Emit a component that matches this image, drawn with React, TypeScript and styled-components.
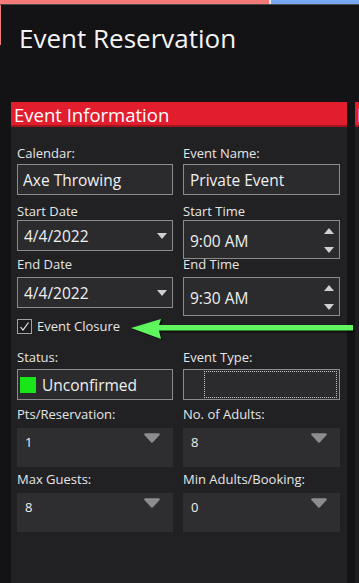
import React from "react";
import styled, { createGlobalStyle } from "styled-components";

const Global = createGlobalStyle`
  html, body { margin: 0; padding: 0; background: #131215; }
  body { font-family: "Open Sans", "Noto Sans", sans-serif; }
  * { box-sizing: border-box; }
`;

const Page = styled.div`
  position: relative;
  width: 359px;
  height: 583px;
  overflow: hidden;
  background: #131215;
  color: #e8e8e8;
`;

const TopStrip = styled.div`
  display: flex;
  height: 5px;
  border-bottom: 1px solid #4a494c;
`;

const StripPart = styled.div<{ $c: string; $w?: string }>`
  background: ${(p) => p.$c};
  flex: ${(p) => (p.$w ? `0 0 ${p.$w}` : "1 1 auto")};
`;

const TitleBar = styled.div`
  height: 97px;
  padding: 17px 0 0 19px;
  background: linear-gradient(#f07a7a, #f07a7a) no-repeat 0 0 / 1px 40px;
`;

const Title = styled.h1`
  margin: 0;
  font-weight: 400;
  font-size: 26px;
  line-height: 32px;
  color: #f4f4f4;
`;

const Content = styled.div`
  display: flex;
  gap: 8px;
  padding-left: 11px;
  height: 481px;
`;

const Panel = styled.section<{ $w: string; $bg: string }>`
  flex: 0 0 ${(p) => p.$w};
  background: ${(p) => p.$bg};
`;

const PanelHeader = styled.div<{ $pl: number }>`
  height: 25px;
  padding: 3px 0 0 ${(p) => p.$pl}px;
  background: #e11d2e;
  border-bottom: 2px solid #a3161f;
  font-size: 18.5px;
  line-height: 20px;
  color: #ffffff;
  white-space: nowrap;
  overflow: hidden;
`;

const Body = styled.div`
  padding: 0 7px 0 6px;
`;

const Row = styled.div<{ $mt: number }>`
  display: grid;
  grid-template-columns: 156px 157px;
  column-gap: 10px;
  margin-top: ${(p) => p.$mt}px;
`;

const Field = styled.div`
  display: flex;
  flex-direction: column;
`;

const Label = styled.label<{ $gap: number }>`
  font-size: 13px;
  line-height: 16px;
  color: #e6e6e6;
  margin-bottom: ${(p) => p.$gap}px;
  white-space: nowrap;
`;

const Input = styled.div<{ $h: number; $pl?: number; $pt?: number; $mb?: number }>`
  position: relative;
  display: flex;
  align-items: center;
  height: ${(p) => p.$h}px;
  padding: ${(p) => p.$pt ?? 0}px 0 0 ${(p) => p.$pl ?? 5}px;
  margin-bottom: ${(p) => p.$mb ?? 0}px;
  background: #2b2a2d;
  border: 1px solid #8b8b8d;
  font-size: 15.5px;
  line-height: 20px;
  color: #f0f0f0;
  white-space: nowrap;
`;

const Combo = styled.div`
  display: flex;
  justify-content: space-between;
  align-items: flex-start;
  height: 39px;
  padding: 6px 13px 0 8px;
  background: #2e2d30;
  font-size: 13px;
  line-height: 16px;
  color: #eeeeee;
`;

const ComboArrow = styled.svg`
  margin-top: -1px;
`;

const DateArrow = styled.svg`
  position: absolute;
  right: 5px;
  top: 12px;
`;

const Spinner = styled.div`
  position: absolute;
  right: 5px;
  top: 7px;
  display: flex;
  flex-direction: column;
  gap: 13px;
`;

const Swatch = styled.span`
  width: 16px;
  height: 16px;
  background: #19e619;
  margin-right: 6px;
  flex: 0 0 auto;
`;

const FocusRect = styled.div`
  flex: 1 1 auto;
  height: 27px;
  margin: 0 2px 0 20px;
  border: 1px dotted #c4c4c4;
`;

const CheckRow = styled.div`
  display: flex;
  align-items: center;
  gap: 5px;
  margin-top: 10px;
  height: 16px;
  font-size: 13px;
  line-height: 16px;
  color: #e6e6e6;
`;

const CheckBox = styled.span`
  display: flex;
  align-items: center;
  justify-content: center;
  width: 15px;
  height: 15px;
  border: 1px solid #a2a2a4;
  background: #1c1b1e;
`;

const ArrowOverlay = styled.svg`
  position: absolute;
  left: 126px;
  top: 314px;
`;

const SmallTri = () => (
  <svg width="10" height="6" viewBox="0 0 10 6">
    <path d="M0 0 L10 0 L5 6 Z" fill="#cfcfd0" />
  </svg>
);

const UpTri = () => (
  <svg width="10" height="6" viewBox="0 0 10 6">
    <path d="M0 6 L10 6 L5 0 Z" fill="#cfcfd0" />
  </svg>
);

const ComboField = ({ label, value }: { label: string; value: string }) => (
  <Field>
    <Label $gap={6}>{label}</Label>
    <Combo>
      <span>{value}</span>
      <ComboArrow width="16" height="10" viewBox="0 0 16 10">
        <path d="M1.5 1.5 L14.5 1.5 L8 8.5 Z" fill="#8d8d8f" stroke="#8d8d8f" strokeWidth="2.5" strokeLinejoin="round" />
      </ComboArrow>
    </Combo>
  </Field>
);

export default function App() {
  return (
    <>
      <Global />
      <Page>
        <TopStrip>
          <StripPart $c="#f47a7a" $w="269px" />
          <StripPart $c="#e8e8ee" $w="2px" />
          <StripPart $c="#79a7f2" />
        </TopStrip>
        <TitleBar>
          <Title>Event Reservation</Title>
        </TitleBar>
        <Content>
          <Panel $w="336px" $bg="#212023">
            <PanelHeader $pl={3}>Event Information</PanelHeader>
            <Body>
              <Row $mt={18}>
                <Field>
                  <Label $gap={3}>Calendar:</Label>
                  <Input $h={31}>Axe Throwing</Input>
                </Field>
                <Field>
                  <Label $gap={3}>Event Name:</Label>
                  <Input $h={31} $pl={6}>Private Event</Input>
                </Field>
              </Row>
              <Row $mt={8}>
                <Field>
                  <Label $gap={1}>Start Date</Label>
                  <Input $h={31} $pl={6}>
                    4/4/2022
                    <DateArrow width="10" height="6" viewBox="0 0 10 6">
                      <path d="M0 0 L10 0 L5 6 Z" fill="#cfcfd0" />
                    </DateArrow>
                  </Input>
                </Field>
                <Field>
                  <Label $gap={1}>Start Time</Label>
                  <Input $h={39} $pl={6} $pt={2} $mb={-8}>
                    9:00 AM
                    <Spinner>
                      <UpTri />
                      <SmallTri />
                    </Spinner>
                  </Input>
                </Field>
              </Row>
              <Row $mt={5}>
                <Field>
                  <Label $gap={5}>End Date</Label>
                  <Input $h={31} $pl={6}>
                    4/4/2022
                    <DateArrow width="10" height="6" viewBox="0 0 10 6">
                      <path d="M0 0 L10 0 L5 6 Z" fill="#cfcfd0" />
                    </DateArrow>
                  </Input>
                </Field>
                <Field>
                  <Label $gap={5}>End Time</Label>
                  <Input $h={39} $pl={6} $pt={2} $mb={-8}>
                    9:30 AM
                    <Spinner>
                      <UpTri />
                      <SmallTri />
                    </Spinner>
                  </Input>
                </Field>
              </Row>
              <CheckRow>
                <CheckBox>
                  <svg width="11" height="11" viewBox="0 0 11 11">
                    <path d="M1.5 6 L4 9 L9.5 1.5" fill="none" stroke="#f2f2f2" strokeWidth="1.1" />
                  </svg>
                </CheckBox>
                Event Closure
              </CheckRow>
              <Row $mt={15}>
                <Field>
                  <Label $gap={4}>Status:</Label>
                  <Input $h={31} $pl={2}>
                    <Swatch />
                    Unconfirmed
                  </Input>
                </Field>
                <Field>
                  <Label $gap={4}>Event Type:</Label>
                  <Input $h={31} $pl={0}>
                    <FocusRect />
                  </Input>
                </Field>
              </Row>
              <Row $mt={6}>
                <ComboField label="Pts/Reservation:" value="1" />
                <ComboField label="No. of Adults:" value="8" />
              </Row>
              <Row $mt={4}>
                <ComboField label="Max Guests:" value="8" />
                <ComboField label="Min Adults/Booking:" value="0" />
              </Row>
            </Body>
          </Panel>
          <Panel $w="60px" $bg="#1e1d20">
            <PanelHeader $pl={2}>Event Details</PanelHeader>
          </Panel>
        </Content>
        <ArrowOverlay width="233" height="30" viewBox="0 0 233 30">
          <g transform="translate(1.5 1.5)" fill="#0a0a0a" opacity="0.75">
            <path d="M5 14 L35 5 L33 11.5 L227 11.5 L227 17 L33 17 L35 25 Z" />
          </g>
          <path d="M5 14 L35 5 L33 11 L227 11 L227 16.5 L33 16.5 L35 25 Z" fill="#5ef55e" />
        </ArrowOverlay>
      </Page>
    </>
  );
}
